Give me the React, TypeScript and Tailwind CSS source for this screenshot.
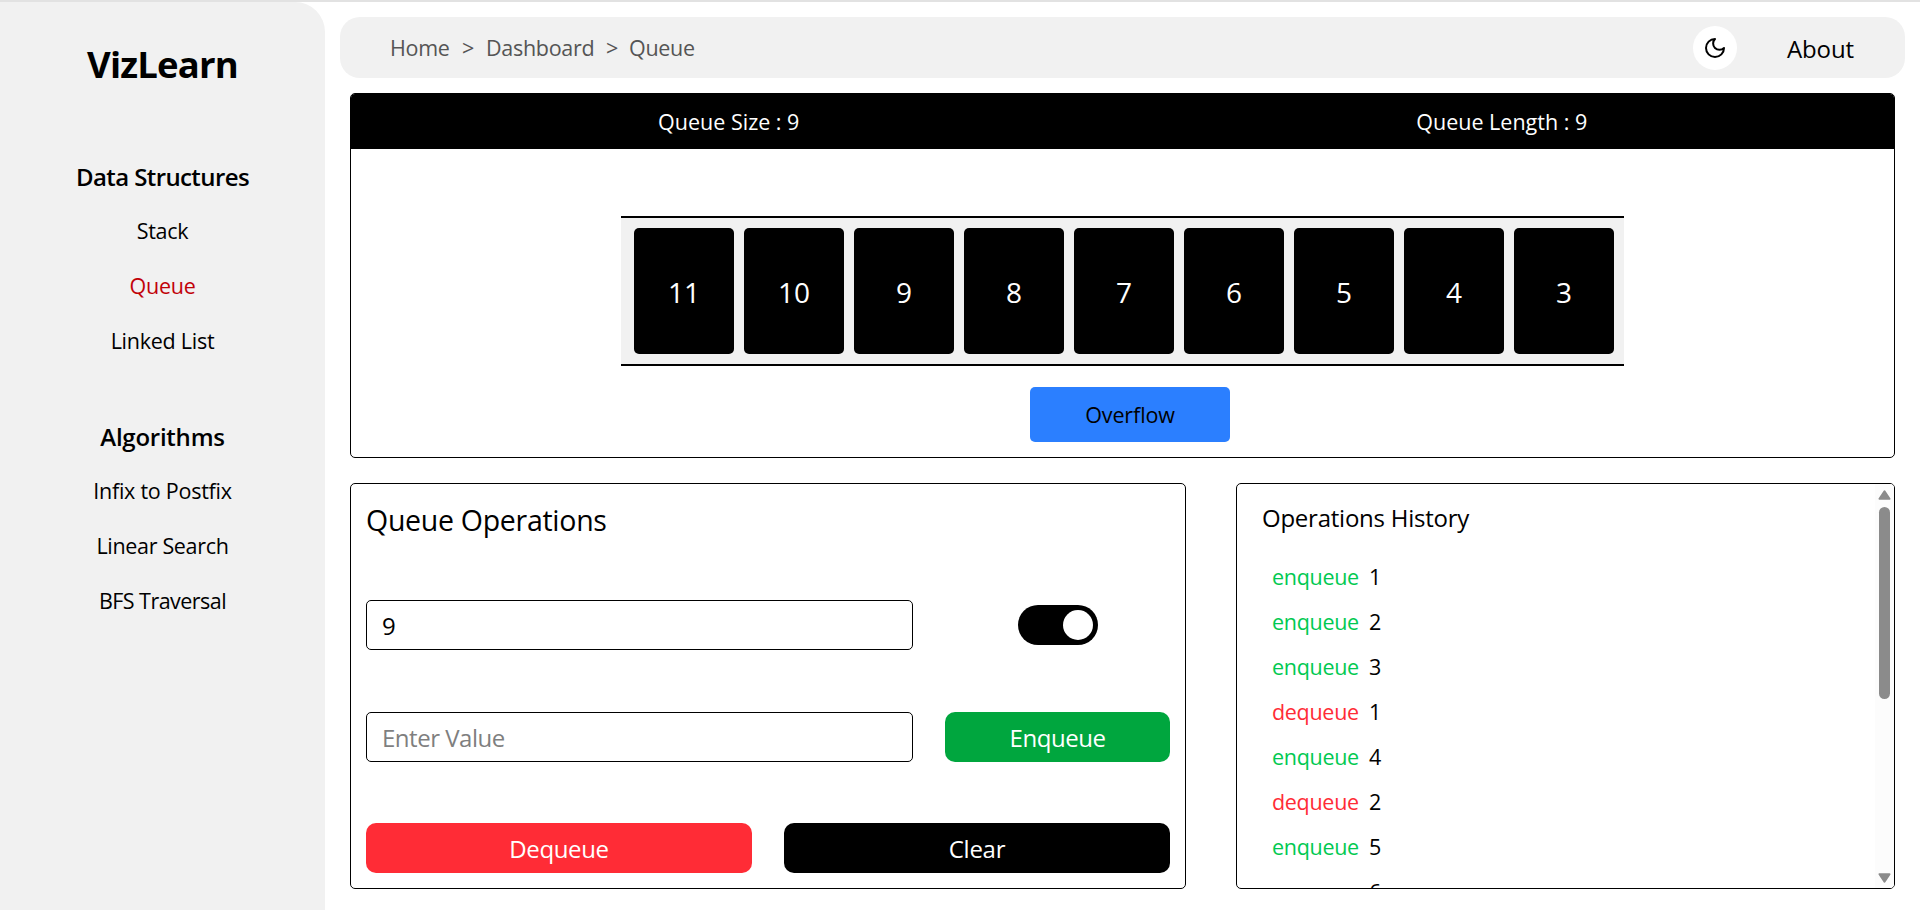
import React from "react";

const structures = [
  { label: "Stack", style: "tracking-[-0.012em]" },
  { label: "Queue", style: "tracking-[-0.012em] text-red-700" },
  { label: "Linked List", style: "tracking-[-0.012em]" },
];

const algorithms = [
  { label: "Infix to Postfix", style: "tracking-[-0.012em]" },
  { label: "Linear Search", style: "tracking-[-0.015em]" },
  { label: "BFS Traversal", style: "tracking-[-0.025em]" },
];

const queue = [11, 10, 9, 8, 7, 6, 5, 4, 3];

const history = [
  { op: "enqueue", value: 1 },
  { op: "enqueue", value: 2 },
  { op: "enqueue", value: 3 },
  { op: "dequeue", value: 1 },
  { op: "enqueue", value: 4 },
  { op: "dequeue", value: 2 },
  { op: "enqueue", value: 5 },
  { op: "enqueue", value: 6 },
];

function Sidebar() {
  return (
    <aside className="flex w-[325px] shrink-0 flex-col items-stretch rounded-tr-[30px] bg-[#f1f1f1] text-center">
      <h1 className="h-[123px] text-[36.5px] leading-[125px] font-bold tracking-[-0.022em]">VizLearn</h1>
      <h2 className="mt-[26px] h-[52px] text-[24px] leading-[52px] font-semibold tracking-[-0.025em]">
        Data Structures
      </h2>
      <ul className="text-[21.5px] leading-[55px]">
        {structures.map((s) => (
          <li key={s.label} className={s.style}>{s.label}</li>
        ))}
      </ul>
      <h2 className="mt-[43px] h-[52px] text-[24px] leading-[52px] font-semibold tracking-[-0.01em]">
        Algorithms
      </h2>
      <ul className="text-[21.5px] leading-[55px]">
        {algorithms.map((a) => (
          <li key={a.label} className={a.style}>{a.label}</li>
        ))}
      </ul>
    </aside>
  );
}

function Navbar() {
  return (
    <nav className="flex h-[61px] w-[1565px] items-center rounded-[20px] bg-[#f1f1f1] pl-[50px]">
      <div className="flex grow text-[21.5px] leading-[60px] tracking-[-0.014em] text-[#555]">
        <span className="w-[72px]">Home</span>
        <span className="w-[24px]">&gt;</span>
        <span className="w-[120px]">Dashboard</span>
        <span className="w-[23px]">&gt;</span>
        <span>Queue</span>
      </div>
      <button className="flex size-11 items-center justify-center rounded-full bg-white">
        <svg
          className="size-6"
          viewBox="0 0 24 24"
          fill="none"
          stroke="black"
          strokeWidth="2"
          strokeLinecap="round"
          strokeLinejoin="round"
        >
          <path d="M12 3a6 6 0 0 0 9 9 9 9 0 1 1-9-9Z" />
        </svg>
      </button>
      <a className="ml-[50px] w-[118px] text-[24px] leading-[61px] tracking-[-0.005em]"><span className="block pt-[2px]">About</span></a>
    </nav>
  );
}

function Visualizer() {
  return (
    <section className="mt-[15px] ml-[10px] flex h-[365px] w-[1545px] flex-col items-center overflow-hidden rounded-[5px] border border-black">
      <div className="grid h-[55px] w-full shrink-0 grid-cols-2 bg-black text-center text-[21.5px] leading-[56px] text-white">
        <span className="pr-[16px]">Queue Size : 9</span>
        <span className="pr-[13px]">Queue Length : 9</span>
      </div>
      <div className="mt-[67px] flex h-[150px] w-[1003px] shrink-0 items-center gap-[10px] border-y-2 border-black bg-[#f1f1f1] pl-[13px]">
        {queue.map((n) => (
          <div
            key={n}
            className="h-[126px] w-[100px] shrink-0 rounded-[5px] bg-black text-center text-[28px] leading-[128px] text-white"
          >
            {n}
          </div>
        ))}
      </div>
      <div className="mt-[21px] ml-[15px] h-[55px] w-[200px] shrink-0 rounded-[5px] bg-blue-500 text-center text-[21.5px] leading-[55px] tracking-[-0.005em]">
        Overflow
      </div>
    </section>
  );
}

function Operations() {
  return (
    <section className="flex h-[406px] w-[836px] flex-col rounded-[5px] border border-black px-[15px] pt-[15px]">
      <h3 className="text-[28.5px] leading-[42px] tracking-[-0.01em]">Queue Operations</h3>
      <div className="mt-[59px] flex items-center">
        <input
          readOnly
          value="9"
          className="h-[50px] w-[547px] rounded-[5px] border border-black px-[15px] text-[24px] tracking-[-0.02em] outline-none"
        />
        <button className="ml-[105px] flex h-10 w-20 items-center justify-end rounded-[20px] bg-black pr-[5px]">
          <span className="size-[30px] rounded-full bg-white" />
        </button>
      </div>
      <div className="mt-[62px] flex gap-8">
        <input
          placeholder="Enter Value"
          className="h-[50px] w-[547px] rounded-[5px] border border-black px-[15px] text-[24px] tracking-[-0.02em] outline-none placeholder:text-[#7f7f7f]"
        />
        <button className="h-[50px] w-[225px] rounded-[10px] bg-green-600 text-[24px] leading-[52px] tracking-[-0.02em] text-white">
          Enqueue
        </button>
      </div>
      <div className="mt-[61px] flex gap-8">
        <button className="h-[50px] w-[386px] rounded-[10px] bg-[#ff2c36] text-[24px] leading-[52px] tracking-[-0.015em] text-white">
          Dequeue
        </button>
        <button className="h-[50px] w-[386px] rounded-[10px] bg-black text-[24px] leading-[52px] tracking-[-0.01em] text-white">
          Clear
        </button>
      </div>
    </section>
  );
}

function History() {
  return (
    <section className="flex h-[406px] w-[659px] overflow-hidden rounded-[5px] border border-black">
      <div className="h-full grow overflow-hidden pt-[13px] pl-[25px]">
        <h3 className="text-[24px] leading-[42px] tracking-[-0.01em]">Operations History</h3>
        <ul className="mt-[15px] pl-[10px] text-[21.5px] leading-[45px]">
          {history.map((h, i) => (
            <li key={i} className="flex">
              <span className={h.op === "enqueue" ? "w-[97px] tracking-[-0.014em] text-green-500" : "w-[97px] tracking-[-0.014em] text-[#ff2c36]"}>
                {h.op}
              </span>
              <span>{h.value}</span>
            </li>
          ))}
        </ul>
      </div>
      <div className="flex h-full w-[19px] flex-col items-center bg-[#fcfcfc] pt-[6px] pb-[5px]">
        <svg width="13" height="10" viewBox="0 0 13 10" fill="#8b8b8b" stroke="#8b8b8b" strokeWidth="2" strokeLinejoin="round">
          <path d="M6.5 1.4 11.5 8.8H1.5Z" />
        </svg>
        <div className="mt-[7px] h-[192px] w-[11px] rounded-full bg-[#8b8b8b]" />
        <svg className="mt-auto" width="13" height="10" viewBox="0 0 13 10" fill="#8b8b8b" stroke="#8b8b8b" strokeWidth="2" strokeLinejoin="round">
          <path d="M6.5 8.6 1.5 1.2h10Z" />
        </svg>
      </div>
    </section>
  );
}

export default function App() {
  return (
    <div className="flex h-[910px] w-full overflow-hidden border-t-2 border-[#e2e2e2] bg-white font-['Open_Sans','Noto_Sans',sans-serif] text-black">
      <Sidebar />
      <main className="flex flex-col pt-[15px] pl-[15px]">
        <Navbar />
        <Visualizer />
        <div className="mt-[25px] ml-[10px] flex gap-[50px]">
          <Operations />
          <History />
        </div>
      </main>
    </div>
  );
}
